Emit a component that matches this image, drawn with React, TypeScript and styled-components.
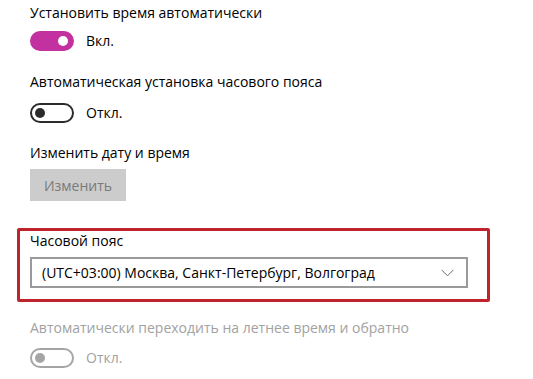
import styled, { createGlobalStyle } from "styled-components";

const GlobalStyle = createGlobalStyle`
    html, body {
        margin: 0;
        padding: 0;
        background: #ffffff;
    }
    body {
        font-family: "Open Sans", "Noto Sans", sans-serif;
        color: #000000;
    }
`

const Page = styled.div`
    width: 533px;
    height: 379px;
    overflow: hidden;
    padding: 3px 0 0 30px;
    box-sizing: border-box;
    display: flex;
    flex-direction: column;
    align-items: flex-start;
`

const Title = styled.div<{ $disabled?: boolean; $gap?: number }>`
    font-size: 14px;
    line-height: 20px;
    margin-top: ${props => props.$gap ?? 0}px;
    color: ${props => props.$disabled ? '#a2a2a2' : '#000000'};
`

const ToggleRow = styled.div<{ $gap: number }>`
    display: flex;
    align-items: center;
    gap: 12px;
    margin-top: ${props => props.$gap}px;
    font-size: 14px;
`

interface TrackProps {
    $on?: boolean
    $disabled?: boolean
}

const Track = styled.span<TrackProps>`
    position: relative;
    width: 44px;
    height: 20px;
    box-sizing: border-box;
    border-radius: 10px;
    border: 2px solid ${props => props.$on ? '#c2319f' : props.$disabled ? '#a5a5a5' : '#2b2b2b'};
    background: ${props => props.$on ? '#c2319f' : '#ffffff'};

    &::after {
        content: "";
        position: absolute;
        top: 3px;
        left: ${props => props.$on ? '26px' : '3px'};
        width: 10px;
        height: 10px;
        border-radius: 50%;
        background: ${props => props.$on ? '#ffffff' : props.$disabled ? '#a5a5a5' : '#2b2b2b'};
    }
`

const ToggleLabel = styled.span<{ $disabled?: boolean }>`
    color: ${props => props.$disabled ? '#a2a2a2' : '#000000'};
    line-height: 20px;
`

const GrayButton = styled.button`
    margin-top: 6px;
    width: 96px;
    height: 32px;
    border: 0;
    padding: 0;
    background: #cccccc;
    color: #7a7a7a;
    font-family: inherit;
    font-size: 14px;
`

const Highlight = styled.div`
    margin-top: 27px;
    margin-left: -13px;
    width: 473px;
    box-sizing: border-box;
    border: 3px solid #c1232c;
    border-radius: 2px;
    padding: 0 19px 11px 10px;
    display: flex;
    flex-direction: column;
`

const Select = styled.div`
    margin-top: 6px;
    height: 31px;
    box-sizing: border-box;
    border: 2px solid #9a9a9a;
    display: flex;
    align-items: center;
    justify-content: space-between;
    padding: 0 12px 0 10px;
    font-size: 14px;
    color: #000000;
`

const Chevron = () => (
    <svg width="13" height="8" viewBox="0 0 13 8" fill="none">
        <path d="M0.5 0.8 L6.5 6.8 L12.5 0.8" stroke="#6d6d6d" strokeWidth="1" />
    </svg>
)

export default function App() {
    return (
        <>
            <GlobalStyle />
            <Page>
                <Title>Установить время автоматически</Title>
                <ToggleRow $gap={8}>
                    <Track $on />
                    <ToggleLabel>Вкл.</ToggleLabel>
                </ToggleRow>

                <Title $gap={21}>Автоматическая установка часового пояса</Title>
                <ToggleRow $gap={11}>
                    <Track />
                    <ToggleLabel>Откл.</ToggleLabel>
                </ToggleRow>

                <Title $gap={20}>Изменить дату и время</Title>
                <GrayButton>Изменить</GrayButton>

                <Highlight>
                    <Title>Часовой пояс</Title>
                    <Select>
                        <span>(UTC+03:00) Москва, Санкт-Петербург, Волгоград</span>
                        <Chevron />
                    </Select>
                </Highlight>

                <Title $disabled $gap={16}>Автоматически переходить на летнее время и обратно</Title>
                <ToggleRow $gap={10}>
                    <Track $disabled />
                    <ToggleLabel $disabled>Откл.</ToggleLabel>
                </ToggleRow>
            </Page>
        </>
    )
}
